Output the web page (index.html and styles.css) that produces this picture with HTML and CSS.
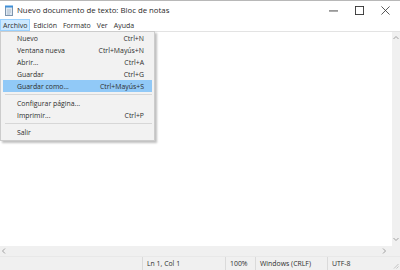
FILE: index.html
```html
<!DOCTYPE html>
<html>
<head>
    <link rel="stylesheet" href="styles.css">
</head>
<body>
    <div class="window">
        <div class="titlebar">
            <svg class="app-icon" width="10" height="11" viewBox="0 0 10 11">
                <rect x="1.5" y="1.5" width="7" height="9" fill="#dfe9f3" stroke="#7d95ad"/>
                <rect x="1" y="0.5" width="8" height="2" fill="#3f8fd8"/>
                <path d="M3 5h4M3 7h4M3 9h3" stroke="#9aa9b8" stroke-width="0.7"/>
            </svg>
            <span class="title">Nuevo documento de texto: Bloc de notas</span>
            <div class="controls">
                <svg width="10" height="10" viewBox="0 0 10 10"><path d="M0 5.5h10" stroke="#333" stroke-width="1"/></svg>
                <svg width="10" height="10" viewBox="0 0 10 10"><rect x="0.5" y="0.5" width="9" height="9" fill="none" stroke="#333"/></svg>
                <svg width="10" height="10" viewBox="0 0 10 10"><path d="M0.5 0.5l9 9M9.5 0.5l-9 9" stroke="#333" stroke-width="0.9"/></svg>
            </div>
        </div>

        <div class="menubar">
            <span class="menu-item active">Archivo</span>
            <span class="menu-item">Edición</span>
            <span class="menu-item">Formato</span>
            <span class="menu-item">Ver</span>
            <span class="menu-item">Ayuda</span>
        </div>

        <div class="editor">
            <div class="text-area"></div>
            <div class="vscroll">
                <svg width="8" height="6" viewBox="0 0 8 6"><path d="M1.5 4L4 1.5 6.5 4" fill="none" stroke="#a0a0a0"/></svg>
                <svg width="8" height="6" viewBox="0 0 8 6"><path d="M1.5 2L4 4.5 6.5 2" fill="none" stroke="#a0a0a0"/></svg>
            </div>
            <div class="hscroll">
                <svg width="6" height="8" viewBox="0 0 6 8"><path d="M4 1.5L1.5 4 4 6.5" fill="none" stroke="#a0a0a0"/></svg>
                <svg width="6" height="8" viewBox="0 0 6 8"><path d="M2 1.5L4.5 4 2 6.5" fill="none" stroke="#a0a0a0"/></svg>
            </div>
            <div class="corner"></div>

            <div class="dropdown">
                <div class="row"><span>Nuevo</span><span>Ctrl+N</span></div>
                <div class="row"><span>Ventana nueva</span><span>Ctrl+Mayús+N</span></div>
                <div class="row"><span>Abrir...</span><span>Ctrl+A</span></div>
                <div class="row"><span>Guardar</span><span>Ctrl+G</span></div>
                <div class="row selected"><span>Guardar como...</span><span>Ctrl+Mayús+S</span></div>
                <div class="sep"></div>
                <div class="row"><span>Configurar página...</span><span></span></div>
                <div class="row"><span>Imprimir...</span><span>Ctrl+P</span></div>
                <div class="sep"></div>
                <div class="row"><span>Salir</span><span></span></div>
            </div>
        </div>

        <div class="statusbar">
            <span class="cell pos">Ln 1, Col 1</span>
            <span class="cell zoom">100%</span>
            <span class="cell eol">Windows (CRLF)</span>
            <span class="cell enc">UTF-8</span>
            <svg class="grip" width="6" height="6" viewBox="0 0 6 6"><path d="M1 5.5L5.5 1M3.5 5.5L5.5 3.5" stroke="#b0b0b0" stroke-width="0.7"/></svg>
        </div>
    </div>
</body>
</html>
```

FILE: styles.css
```css
body {
    margin: 0;
    font-family: "Open Sans", "Noto Sans", sans-serif;
    font-size: 6.9px;
    color: #2e2e2e;
    background: #fff;
}

.window {
    height: 270px;
    display: flex;
    flex-direction: column;
    border-top: 1px solid #b8b8b8;
    box-sizing: border-box;
}

.titlebar {
    height: 18px;
    display: flex;
    align-items: center;
    padding-left: 4px;
}

.app-icon {
    margin-right: 3px;
}

.title {
    font-size: 7.8px;
    color: #2a2a2a;
}

.controls {
    margin-left: auto;
    display: flex;
    gap: 17px;
    padding-right: 10px;
}

.controls svg {
    width: 9px;
    height: 9px;
}

.menubar {
    height: 12px;
    display: flex;
    align-items: stretch;
    font-size: 7px;
}

.menu-item {
    display: flex;
    align-items: center;
    padding: 0 3px;
}

.menu-item.active {
    background: #cce8ff;
    outline: 1px solid #99d1ff;
    outline-offset: -1px;
}

.editor {
    flex: 1;
    position: relative;
    display: grid;
    grid-template-columns: 1fr 8px;
    grid-template-rows: 1fr 10px;
    border-top: 1px solid #e3e3e3;
}

.vscroll {
    background: #f0f0f0;
    display: flex;
    flex-direction: column;
    justify-content: space-between;
    align-items: center;
    padding: 3px 0 4px;
}

.hscroll {
    background: #f0f0f0;
    display: flex;
    justify-content: space-between;
    align-items: center;
    padding: 0 5px 0 1px;
}

.corner {
    background: #f0f0f0;
}

.dropdown {
    position: absolute;
    top: -1px;
    left: 0;
    width: 149px;
    background: #f2f2f2;
    border: 1px solid #cccccc;
    box-shadow: 2px 2px 2px rgba(0,0,0,0.25);
    padding: 0 2px 2px;
}

.row {
    height: 12px;
    display: flex;
    align-items: center;
    justify-content: space-between;
    padding: 0 8px 0 14px;
}

.row.selected {
    background: #91c9f7;
}

.sep {
    height: 1px;
    background: #d7d7d7;
    margin: 2px 0 2px 2px;
}

.statusbar {
    height: 13px;
    background: #f0f0f0;
    border-top: 1px solid #e8e8e8;
    display: flex;
    align-items: center;
    position: relative;
}

.cell {
    height: 100%;
    display: flex;
    align-items: center;
    border-left: 1px solid #dadada;
    padding-left: 4px;
    box-sizing: border-box;
}

.pos {
    margin-left: 142px;
    width: 83px;
}

.zoom {
    width: 30px;
}

.eol {
    width: 72px;
}

.enc {
    flex: 1;
}

.grip {
    position: absolute;
    right: 1px;
    bottom: 1px;
}
```
